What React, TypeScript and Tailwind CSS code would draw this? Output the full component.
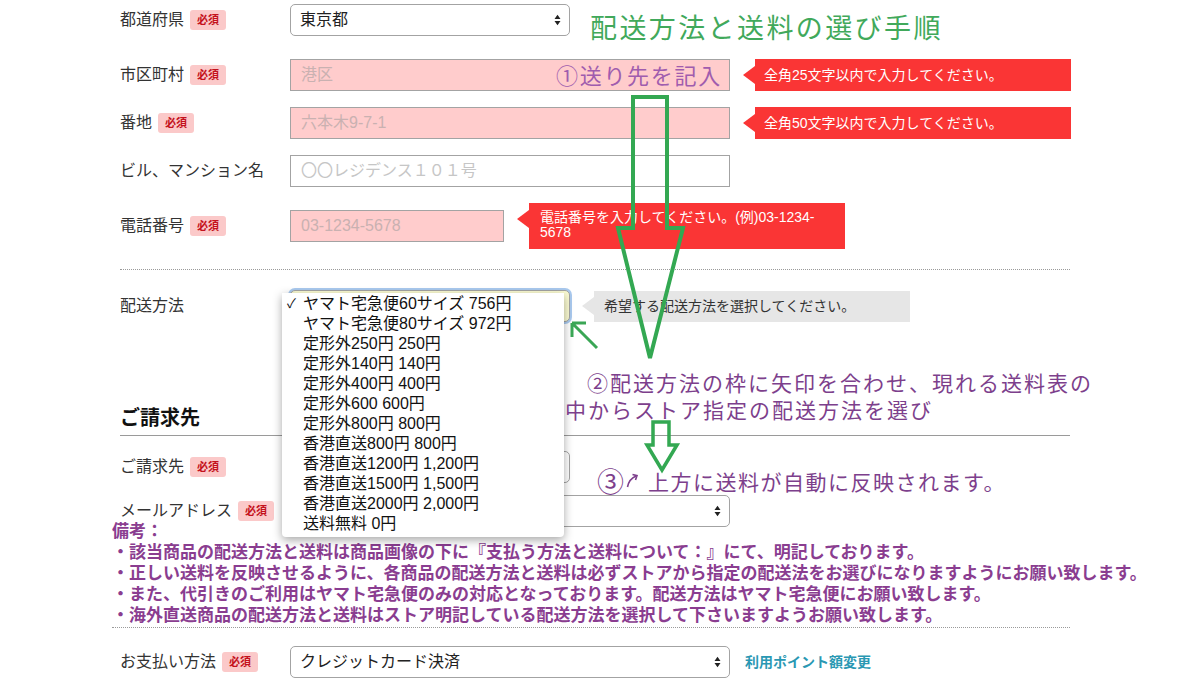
import React from 'react';

const shippingOptions = [
  'ヤマト宅急便60サイズ 756円',
  'ヤマト宅急便80サイズ 972円',
  '定形外250円 250円',
  '定形外140円 140円',
  '定形外400円 400円',
  '定形外600 600円',
  '定形外800円 800円',
  '香港直送800円 800円',
  '香港直送1200円 1,200円',
  '香港直送1500円 1,500円',
  '香港直送2000円 2,000円',
  '送料無料 0円',
];

const notes = [
  '・該当商品の配送方法と送料は商品画像の下に『支払う方法と送料について：』にて、明記しております。',
  '・正しい送料を反映させるように、各商品の配送方法と送料は必ずストアから指定の配送法をお選びになりますようにお願い致します。',
  '・また、代引きのご利用はヤマト宅急便のみの対応となっております。配送方法はヤマト宅急便にお願い致します。',
  '・海外直送商品の配送方法と送料はストア明記している配送方法を選択して下さいますようお願い致します。',
];

function Required() {
  return (
    <span className="inline-flex h-[20px] w-[36px] items-center justify-center rounded-[3px] bg-[#fbc9c9] text-[11px] font-bold text-[#c4121c]">
      必須
    </span>
  );
}

function UpDown() {
  return (
    <svg width="7" height="12" viewBox="0 0 7 12" className="shrink-0">
      <path d="M0.5 5 L3.5 0.8 L6.5 5 Z M0.5 7 L3.5 11.2 L6.5 7 Z" fill="#222" />
    </svg>
  );
}

function Row({
  label,
  required,
  className = '',
  children,
}: {
  label: string;
  required?: boolean;
  className?: string;
  children: React.ReactNode;
}) {
  return (
    <div className={`ml-[120px] flex items-center ${className}`}>
      <div className="flex w-[170px] shrink-0 items-center gap-[6px] text-[16px] text-[#333]">
        {label}
        {required && <Required />}
      </div>
      {children}
    </div>
  );
}

function Select({ value, className = '' }: { value?: string; className?: string }) {
  return (
    <div
      className={`flex h-[32px] shrink-0 items-center justify-between rounded-[5px] border border-[#a3a3a3] pl-[9px] pr-[8px] text-[16px] text-[#222] ${className}`}
    >
      <span>{value}</span>
      <UpDown />
    </div>
  );
}

function Field({ placeholder, error, className = '' }: { placeholder: string; error?: boolean; className?: string }) {
  return (
    <div
      className={`flex h-[32px] shrink-0 items-center border border-[#a3a3a3] px-[10px] text-[16px] ${
        error ? 'bg-[#ffcccc] text-[#c9b1b1]' : 'bg-white text-[#c6c6c6]'
      } ${className}`}
    >
      {placeholder}
    </div>
  );
}

function Tip({
  children,
  gray,
  className = '',
  arrowClass = 'self-center',
}: {
  children: React.ReactNode;
  gray?: boolean;
  className?: string;
  arrowClass?: string;
}) {
  return (
    <div className={`flex items-stretch ${className}`}>
      <div
        className={`h-0 w-0 border-y-[9px] border-r-[12px] border-y-transparent ${arrowClass} ${
          gray ? 'border-r-[#e6e6e6]' : 'border-r-[#fa3535]'
        }`}
      />
      <div
        className={`w-[316px] text-[14px] ${gray ? 'bg-[#e6e6e6] text-[#333]' : 'bg-[#fa3535] text-white'}`}
      >
        {children}
      </div>
    </div>
  );
}

function ShippingMenu() {
  return (
    <div className="absolute left-[-8px] top-[3px] z-20 h-[244px] w-[282px] rounded-b-[4px] bg-white pt-[1px] text-[16px] text-[#111] shadow-[0_3px_10px_rgba(0,0,0,0.35)]">
      {shippingOptions.map((option, i) => (
        <div key={option} className="relative flex h-[20px] items-center pl-[21px] leading-[20px]">
          {i === 0 && <span className="absolute left-[5px] text-[13px]">✓</span>}
          {option}
        </div>
      ))}
    </div>
  );
}

function Arrows() {
  return (
    <svg className="pointer-events-none absolute left-0 top-0 z-30" width="1202" height="689">
      <path
        d="M633 97 H667 V228 H683 L650 358 L618 228 H633 Z"
        fill="none"
        stroke="#33a852"
        strokeWidth="4"
      />
      <path
        d="M653 422 H669 V445 H677 L662 470 L647 445 H653 Z"
        fill="none"
        stroke="#33a852"
        strokeWidth="3.5"
      />
      <path d="M597 348 L573 324 M572 323 H586 M572 323 V337" fill="none" stroke="#3aa655" strokeWidth="3" />
    </svg>
  );
}

function HookArrow() {
  return (
    <svg width="16" height="16" viewBox="0 0 16 16" className="ml-[2px] mr-[6px] self-start mt-[4px]">
      <path d="M1.5 15 Q3 7 10 4" fill="none" stroke="#7d3f8c" strokeWidth="1.6" />
      <path d="M6.5 2.5 L11 3.6 L9.5 8" fill="none" stroke="#7d3f8c" strokeWidth="1.6" />
    </svg>
  );
}

export default function App() {
  return (
    <div className="relative h-[689px] w-[1202px] overflow-hidden bg-white font-['Liberation_Sans','Noto_Sans_CJK_JP',sans-serif]">
      <div className="flex flex-col pt-[4px]">
        <Row label="都道府県" required>
          <Select value="東京都" className="w-[280px] bg-white" />
        </Row>

        <Row label="市区町村" required className="mt-[23px]">
          <Field placeholder="港区" error className="w-[440px]" />
          <Tip className="ml-[13px] h-[32px]">
            <div className="flex h-full items-center pl-[9px]">全角25文字以内で入力してください。</div>
          </Tip>
        </Row>

        <Row label="番地" required className="mt-[16px]">
          <Field placeholder="六本木9-7-1" error className="w-[440px]" />
          <Tip className="ml-[13px] h-[32px]">
            <div className="flex h-full items-center pl-[9px]">全角50文字以内で入力してください。</div>
          </Tip>
        </Row>

        <Row label="ビル、マンション名" className="mt-[16px]">
          <Field placeholder="〇〇レジデンス１０１号" className="w-[440px]" />
        </Row>

        <Row label="電話番号" required className="mt-[16px]">
          <Field placeholder="03-1234-5678" error className="w-[214px]" />
          <Tip className="ml-[13px] h-[46px]" arrowClass="mt-[7px]">
            <div className="pl-[11px] pt-[7px] leading-[15px]">
              電話番号を入力してください。(例)03-1234-
              <br />
              5678
            </div>
          </Tip>
        </Row>

        <div className="ml-[120px] mt-[20px] w-[950px] border-t border-dotted border-[#9a9a9a]" />

        <Row label="配送方法" className="mt-[20px]">
          <div className="relative">
            <Select className="w-[280px] bg-[#fbfbd2] shadow-[0_0_0_2px_#a9c9ee]" />
            <ShippingMenu />
          </div>
          <Tip gray className="ml-[12px] h-[31px]">
            <div className="flex h-full items-center pl-[10px]">希望する配送方法を選択してください。</div>
          </Tip>
        </Row>

        <div className="ml-[120px] mt-[81px] h-[33px] w-[950px] border-b border-[#9a9a9a] pt-[1px] text-[20px] font-bold leading-[28px] text-[#111]">
          ご請求先
        </div>

        <Row label="ご請求先" required className="mt-[15px]">
          <Select className="w-[280px] bg-white" />
        </Row>

        <Row label="メールアドレス" required className="mt-[12px]">
          <Select className="w-[440px] bg-white" />
        </Row>

        <div className="relative z-10 -mt-[6px] ml-[112px] whitespace-nowrap text-[17px] font-bold leading-[21px] text-[#8a3d90]">
          <div>備考：</div>
          {notes.map((line) => (
            <div key={line}>{line}</div>
          ))}
        </div>

        <div className="ml-[112px] mt-[1px] w-[958px] border-t border-dotted border-[#9a9a9a]" />

        <Row label="お支払い方法" required className="mt-[18px]">
          <Select value="クレジットカード決済" className="w-[440px] bg-white" />
          <a className="ml-[15px] text-[14px] font-bold text-[#2a98b3]">利用ポイント額変更</a>
        </Row>
      </div>

      <Arrows />

      <div className="pointer-events-none absolute left-[590px] top-[13px] z-30 whitespace-nowrap text-[27px] leading-[32px] tracking-[2.4px] text-[#41a95b]">
        配送方法と送料の選び手順
      </div>
      <div className="pointer-events-none absolute left-[556px] top-[64px] z-30 whitespace-nowrap text-[22px] leading-[26px] tracking-[1.7px] text-[#a05cae]">
        ①送り先を記入
      </div>
      <div className="pointer-events-none absolute left-[565px] top-[370px] z-30 whitespace-nowrap text-[21px] leading-[27px] tracking-[2px] text-[#7d3f8c]">
        <div className="pl-[22px]">②配送方法の枠に矢印を合わせ、現れる送料表の</div>
        <div>中からストア指定の配送方法を選び</div>
      </div>
      <div className="pointer-events-none absolute left-[597px] top-[468px] z-30 flex items-end whitespace-nowrap text-[21px] leading-[30px] tracking-[1.5px] text-[#7d3f8c]">
        <span className="text-[27px] leading-[30px] tracking-normal">③</span>
        <HookArrow />
        <span>上方に送料が自動に反映されます。</span>
      </div>
    </div>
  );
}
